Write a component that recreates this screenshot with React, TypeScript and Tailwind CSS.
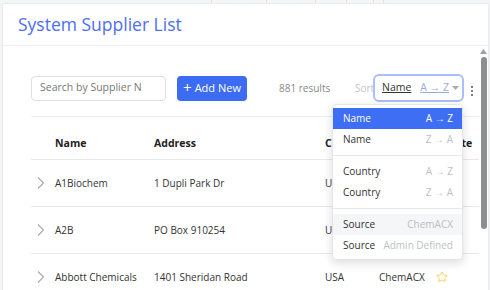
import React from 'react';
import { Star } from 'lucide-react';

const rows = [
  { name: 'A1Biochem', address: '1 Dupli Park Dr', country: 'USA', source: 'ChemACX' },
  { name: 'A2B', address: 'PO Box 910254', country: 'USA', source: 'ChemACX' },
  { name: 'Abbott Chemicals', address: '1401 Sheridan Road', country: 'USA', source: 'ChemACX' },
];

const menuGroups = [
  [
    { left: 'Name', right: 'A → Z', active: true },
    { left: 'Name', right: 'Z → A' },
  ],
  [
    { left: 'Country', right: 'A → Z' },
    { left: 'Country', right: 'Z → A' },
  ],
  [
    { left: 'Source', right: 'ChemACX', hover: true },
    { left: 'Source', right: 'Admin Defined' },
  ],
];

const SortMenu = () => (
  <div className="absolute right-[1px] top-[30px] w-[131px] bg-white rounded-[4px] border border-[#e4e6ea] shadow-[0_3px_10px_rgba(0,0,0,0.14)] py-[3px] z-10">
    {menuGroups.map((group, gi) => (
      <div key={gi}>
        {gi > 0 && <div className="h-px bg-[#e6e7ea] my-[5px]" />}
        {group.map((item, i) => (
          <div
            key={i}
            className={
              'h-[21px] flex items-center justify-between pl-[10px] pr-[9px] text-[10px] whitespace-nowrap ' +
              (item.active ? 'bg-[#3e6ef3] text-white' : item.hover ? 'bg-[#f5f6f8] text-[#333]' : 'text-[#333]')
            }
          >
            <span>{item.left}</span>
            <span className={item.active ? 'text-white' : 'text-[#bcbfc5]'}>{item.right}</span>
          </div>
        ))}
      </div>
    ))}
  </div>
);

export default function App() {
  return (
    <div className="w-[490px] h-[290px] overflow-hidden bg-[#f4f5f7] font-['Open_Sans',sans-serif]">
      <div className="h-[3px] flex">
        <div className="w-[212px] border-r border-[#e2e2e2]" />
        <div className="w-[55px] border-r border-[#e2e2e2]" />
        <div className="w-[49px] border-r border-[#e2e2e2]" />
        <div className="w-[31px] border-r border-[#e2e2e2]" />
        <div className="w-[27px] border-r border-[#e2e2e2]" />
        <div className="w-[10px] border-r border-[#e2e2e2]" />
      </div>
      <div className="ml-[2px] w-[487px] h-[290px] bg-white border border-[#ebebeb] flex flex-col">
        <div className="h-[42px] shrink-0 flex items-center pl-[15px] border-b border-[#f0f0f0]">
          <h1 className="text-[17.5px] text-[#4d6ef5] leading-none">System Supplier List</h1>
        </div>
        <div className="flex flex-1 min-h-0">
          <div className="flex-1 min-w-0 overflow-hidden pl-[28px] pt-[28px]">
            <div className="flex items-center h-[28px] whitespace-nowrap">
              <div className="w-[135px] h-[25px] shrink-0 border border-[#dcdfe3] rounded-[4px] flex items-center pl-[8px] text-[10.5px] text-[#777]">
                Search by Supplier N
              </div>
              <button className="ml-[11px] w-[70px] h-[25px] shrink-0 bg-[#3d6cf4] rounded-[4px] text-white text-[11px] flex items-center justify-center gap-[3px]">
                <span className="text-[15px] leading-none -mt-[1px]">+</span>
                <span>Add New</span>
              </button>
              <span className="ml-[32px] w-[76px] shrink-0 text-[10px] text-[#888]">881 results</span>
              <span className="w-[18px] shrink-0 text-[10px] text-[#c6c6c6]">Sort:</span>
              <div className="relative shrink-0">
                <div className="w-[91px] h-[28px] border-2 border-[#a8bffa] rounded-[6px] flex items-center pl-[7px] bg-white overflow-hidden">
                  <span className="text-[10.5px] text-[#333] underline">Name</span>
                  <span className="ml-[9px] text-[10.5px] text-[#97abe3] underline">A → Z</span>
                  <svg className="ml-[3px] shrink-0" width="7" height="4" viewBox="0 0 7 4"><path d="M0 0h7L3.5 4z" fill="#aaa" /></svg>
                </div>
                <SortMenu />
              </div>
              <div className="ml-[7px] flex flex-col gap-[2px] mt-[6px]">
                <div className="w-[2px] h-[2px] rounded-full bg-[#555]" />
                <div className="w-[2px] h-[2px] rounded-full bg-[#555]" />
                <div className="w-[2px] h-[2px] rounded-full bg-[#555]" />
              </div>
            </div>
            <div className="mt-[14px] h-px bg-[#ececec] w-[470px]" />
            <div className="w-[470px] whitespace-nowrap">
              <div className="h-[43px] flex items-end pb-[7px] border-b border-[#e8e8e8] text-[10.5px] font-bold text-[#222]">
                <div className="w-[24px] shrink-0" />
                <div className="w-[99px] shrink-0">Name</div>
                <div className="w-[171px] shrink-0">Address</div>
                <div className="w-[54px] shrink-0">Country</div>
                <div className="w-[50px] shrink-0">Source</div>
                <div>Favorite</div>
              </div>
              {rows.map((r, i) => (
                <div key={i} className="h-[47px] flex items-center border-b border-[#e8e8e8] text-[10px] text-[#333]">
                  <div className="w-[24px] shrink-0 pl-[6px]">
                    <svg width="8" height="12" viewBox="0 0 8 12">
                      <path d="M1 0.5L6.5 6L1 11.5" fill="none" stroke="#a8a8a8" strokeWidth="1.1" />
                    </svg>
                  </div>
                  <div className="w-[99px] shrink-0">{r.name}</div>
                  <div className="w-[171px] shrink-0">{r.address}</div>
                  <div className="w-[54px] shrink-0">{r.country}</div>
                  <div className="w-[57px] shrink-0">{r.source}</div>
                  <div>
                    <Star size={12} strokeWidth={1.5} color="#f2c12e" />
                  </div>
                </div>
              ))}
            </div>
          </div>
          <div className="w-[9px] shrink-0 flex flex-col items-center pt-[3px]">
            <svg width="7" height="5" viewBox="0 0 7 5"><path d="M0 5L3.5 0L7 5z" fill="#a0a0a0" /></svg>
            <div className="mt-[3px] w-[6px] h-[172px] rounded-full bg-[#8e8e8e]" />
          </div>
        </div>
      </div>
    </div>
  );
}
